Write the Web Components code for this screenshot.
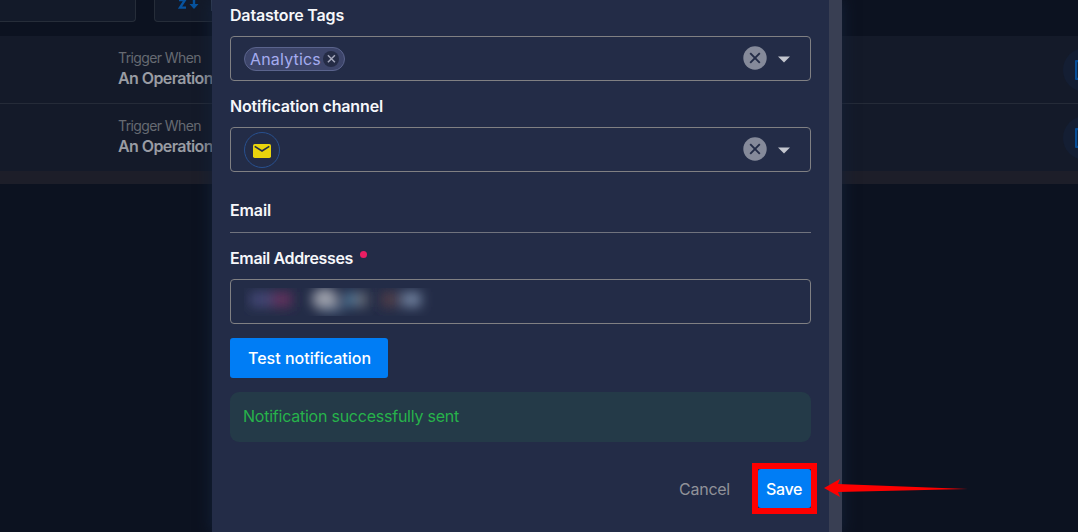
<!DOCTYPE html>
<html lang="en"><head><meta charset="utf-8"><title>Notification</title>
<style>html,body{margin:0;height:100%;overflow:hidden;background:#0c1220;font-family:Inter,"Open Sans",sans-serif}</style></head>
<body>
<app-shell>
  <list-toolbar></list-toolbar>
  <rule-list><rule-row></rule-row><rule-row></rule-row></rule-list>
  <edit-dialog slot="dialog">
    <field-label w="114">Datastore Tags</field-label>
    <select-box clearable><tag-chip></tag-chip></select-box>
    <field-label w="153" style="margin-top:14px">Notification channel</field-label>
    <select-box clearable><mail-badge></mail-badge></select-box>
    <section-title></section-title>
    <field-label w="123" required style="margin-top:14px">Email Addresses</field-label>
    <select-box><redacted-value></redacted-value></select-box>
    <ui-button style="width:158px;height:40px;margin-top:14px"><fit-text w="121" style="margin-right:1px">Test notification</fit-text></ui-button>
    <success-note><fit-text w="216">Notification successfully sent</fit-text></success-note>
    <dialog-actions></dialog-actions>
  </edit-dialog>
</app-shell>
<script>
const define = (name, html, init) => customElements.define(name, class extends HTMLElement {
  constructor() {
    super();
    this.attachShadow({mode: 'open'}).innerHTML = '<style>:host{display:block;box-sizing:border-box}*{box-sizing:border-box}</style>' + html;
  }
  connectedCallback() { if (init) init(this, this.shadowRoot); }
});
// Spreads a single line of text over the width given in "w".
define('fit-text', `<style>:host{display:inline-block;white-space:nowrap;width:var(--w)}span{display:inline-block}</style><span><slot></slot></span>`, (el, root) => {
  const s = root.querySelector('span'), w = +el.getAttribute('w');
  el.style.setProperty('--w', w + 'px');
  s.style.letterSpacing = '0px';
  s.style.letterSpacing = (w - s.getBoundingClientRect().width) / el.textContent.length + 'px';
});
define('field-label', `<style>:host{height:22px;line-height:22px;margin-bottom:10px;font-size:16px;font-weight:600;color:#f6f7fa}
div{display:flex}i{display:none;width:7px;height:7px;border-radius:50%;background:#e91e63;margin:4px 0 0 7px}:host([required]) i{display:block}</style>
<div><fit-text><slot></slot></fit-text><i></i></div>`, (el, root) => {
  const f = document.createElement('fit-text');
  f.setAttribute('w', el.getAttribute('w'));
  f.textContent = el.textContent;
  root.querySelector('fit-text').replaceWith(f);
});
define('select-box', `<style>:host{height:45px;border:1px solid #808083;border-radius:4px;display:flex;align-items:center;padding:0 20px 0 13px}
.c{display:none;margin-left:auto;align-items:center;gap:11px}:host([clearable]) .c{display:flex}svg{display:block}</style>
<slot></slot><div class="c"><svg width="24" height="24" style="margin-bottom:1px"><circle cx="12" cy="12" r="11.7" fill="#858a9a"/><path d="M7.2 7.2l9.6 9.6m0-9.6l-9.6 9.6" stroke="#232c47" stroke-width="1.9"/></svg>
<svg width="12" height="7" style="margin-top:1px"><path d="M0 .4h12L6 6.6z" fill="#c3c6cf"/></svg></div>`);
define('tag-chip', `<style>:host{display:flex;align-items:center;justify-content:space-between;width:101px;height:24px;border:1px solid #5b648d;border-radius:12px;background:#3d456a;color:#a5acf0;font-size:16px;line-height:22px;padding:0 5px}svg{display:block}</style>
<fit-text w="71">Analytics</fit-text><svg width="16" height="16"><circle cx="8" cy="8" r="8" fill="#252c46"/><path d="M4.9 4.2l7 7m0-7l-7 7" stroke="#a4a7bb" stroke-width="1.5"/></svg>`);
define('mail-badge', `<style>:host{display:flex;align-items:center;justify-content:center;width:36px;height:36px;border:1px solid #28508f;border-radius:50%;margin-top:1px}</style>
<svg width="18" height="14" style="margin-top:2px"><rect y="0" width="18" height="14" rx="1.7" fill="#e9d40d"/><path d="M1.7 2.4L9 7l7.3-4.6" fill="none" stroke="#232c47" stroke-width="1.6"/></svg>`);
define('section-title', `<style>:host{height:34px;margin-top:27px;line-height:22px;border-bottom:1px solid #70737e;font-size:16px;font-weight:600;color:#f6f7fa}</style><fit-text w="41">Email</fit-text>`);
define('redacted-value', `<style>:host{height:32px;width:200px;margin-top:-3px}svg{display:block}</style>
<svg width="200" height="32"><defs><filter id="b" x="-60%" y="-100%" width="220%" height="300%"><feGaussianBlur stdDeviation="6"/></filter><clipPath id="k"><path d="M0 4h200v28H0z"/></clipPath></defs>
<g clip-path="url(#k)"><g filter="url(#b)"><rect x="6" y="8" width="22" height="15" fill="#4b4d80" opacity=".8"/><rect x="28" y="8" width="20" height="15" fill="#6c3461" opacity=".85"/></g>
<g filter="url(#b)"><ellipse cx="81" cy="15" rx="13" ry="11" fill="#aeb0b9" opacity=".88"/><rect x="77" y="22" width="22" height="6" fill="#526c8b"/><rect x="99" y="8" width="14" height="15" fill="#5684a4" opacity=".75"/><rect x="113" y="8" width="10" height="15" fill="#7c7d80" opacity=".8"/></g>
<g filter="url(#b)"><rect x="137" y="8" width="18" height="15" fill="#503c4a"/><rect x="158" y="8" width="19" height="15" fill="#70809d"/></g></g></svg>`);
define('ui-button', `<style>:host{display:flex;align-items:center;justify-content:center;background:#007df5;border-radius:3px;color:#fff;font-size:16px;font-weight:500}</style><slot></slot>`);
define('success-note', `<style>:host{display:flex;align-items:center;height:50px;margin-top:14px;padding:0 13px 2px;border-radius:9px;background:#243a48;color:#27b34b;font-size:16px}</style><slot></slot>`);
define('dialog-actions', `<style>:host{display:flex;justify-content:flex-end;align-items:center;gap:28px;margin-top:27px;height:39px;font-size:16px;color:#909299}
.s{position:relative}ui-button{width:53px;height:39px}.m{position:absolute;inset:-6px;border:6px solid #fe0000}svg{position:absolute;left:66px;top:9px;overflow:visible}</style>
<fit-text w="51">Cancel</fit-text><div class="s"><ui-button><fit-text w="36" style="margin-right:1px">Save</fit-text></ui-button><div class="m"></div>
<svg width="144" height="20"><path d="M0 10L16 1l-2 5 130 5-130 3 2 5z" fill="#fe0000"/></svg></div>`);
define('edit-dialog', `<style>:host{height:532px;width:630px;padding:4px 31px 0 18px;background:linear-gradient(to left,#393f53 13px,#232c47 13px);box-shadow:0 0 14px #13223a}</style><slot></slot>`);
define('list-toolbar', `<style>:host{display:flex;gap:18px;height:36px}div{height:22px;border:1px solid #262d39;border-top:0;background:#131a29}
.a{width:136px;border-left:0;border-radius:0 0 4px}.b{width:250px;border-radius:0 0 0 4px;display:flex;padding-left:23px}i{width:1px;height:11px;margin-left:11px;background:#38445b}svg{display:block}</style>
<div class="a"></div><div class="b"><svg width="22" height="12"><path d="M1 0h6L2 7.6h6M16 0v6" fill="none" stroke="#07539e" stroke-width="2.4"/><path d="M11.5 4h9L16 9z" fill="#07539e"/></svg><i></i></div>`);
define('rule-list', `<style>:host{background:#141a29;border-bottom:13px solid #1d1e29}</style><slot></slot>`);
define('rule-row', `<style>:host{display:flex;justify-content:space-between;height:67px;padding:12px 0 0 118px;overflow:hidden}:host(:first-child){height:68px;border-bottom:1px solid #252b38}
.t{font-size:14px;line-height:20px;color:#666a72}.t div{font-size:16px;font-weight:600;color:#999ca3;white-space:nowrap}
.o{flex:none;width:44px;height:44px;border-radius:50%;background:#141e33;margin-right:-29px;padding:12px}svg{display:block}</style>
<div class="t"><fit-text w="83">Trigger When</fit-text><div><fit-text w="95">An Operation</fit-text></div></div>
<div class="o"><svg width="20" height="20"><rect x="1" y="1" width="18" height="18" rx="1" fill="none" stroke="#074d96" stroke-width="2.4"/></svg></div>`);
define('app-shell', `<style>:host{position:relative;height:532px;overflow:hidden}.d{position:absolute;left:212px;top:0}</style><slot></slot><div class="d"><slot name="dialog"></slot></div>`);
</script>
</body></html>
